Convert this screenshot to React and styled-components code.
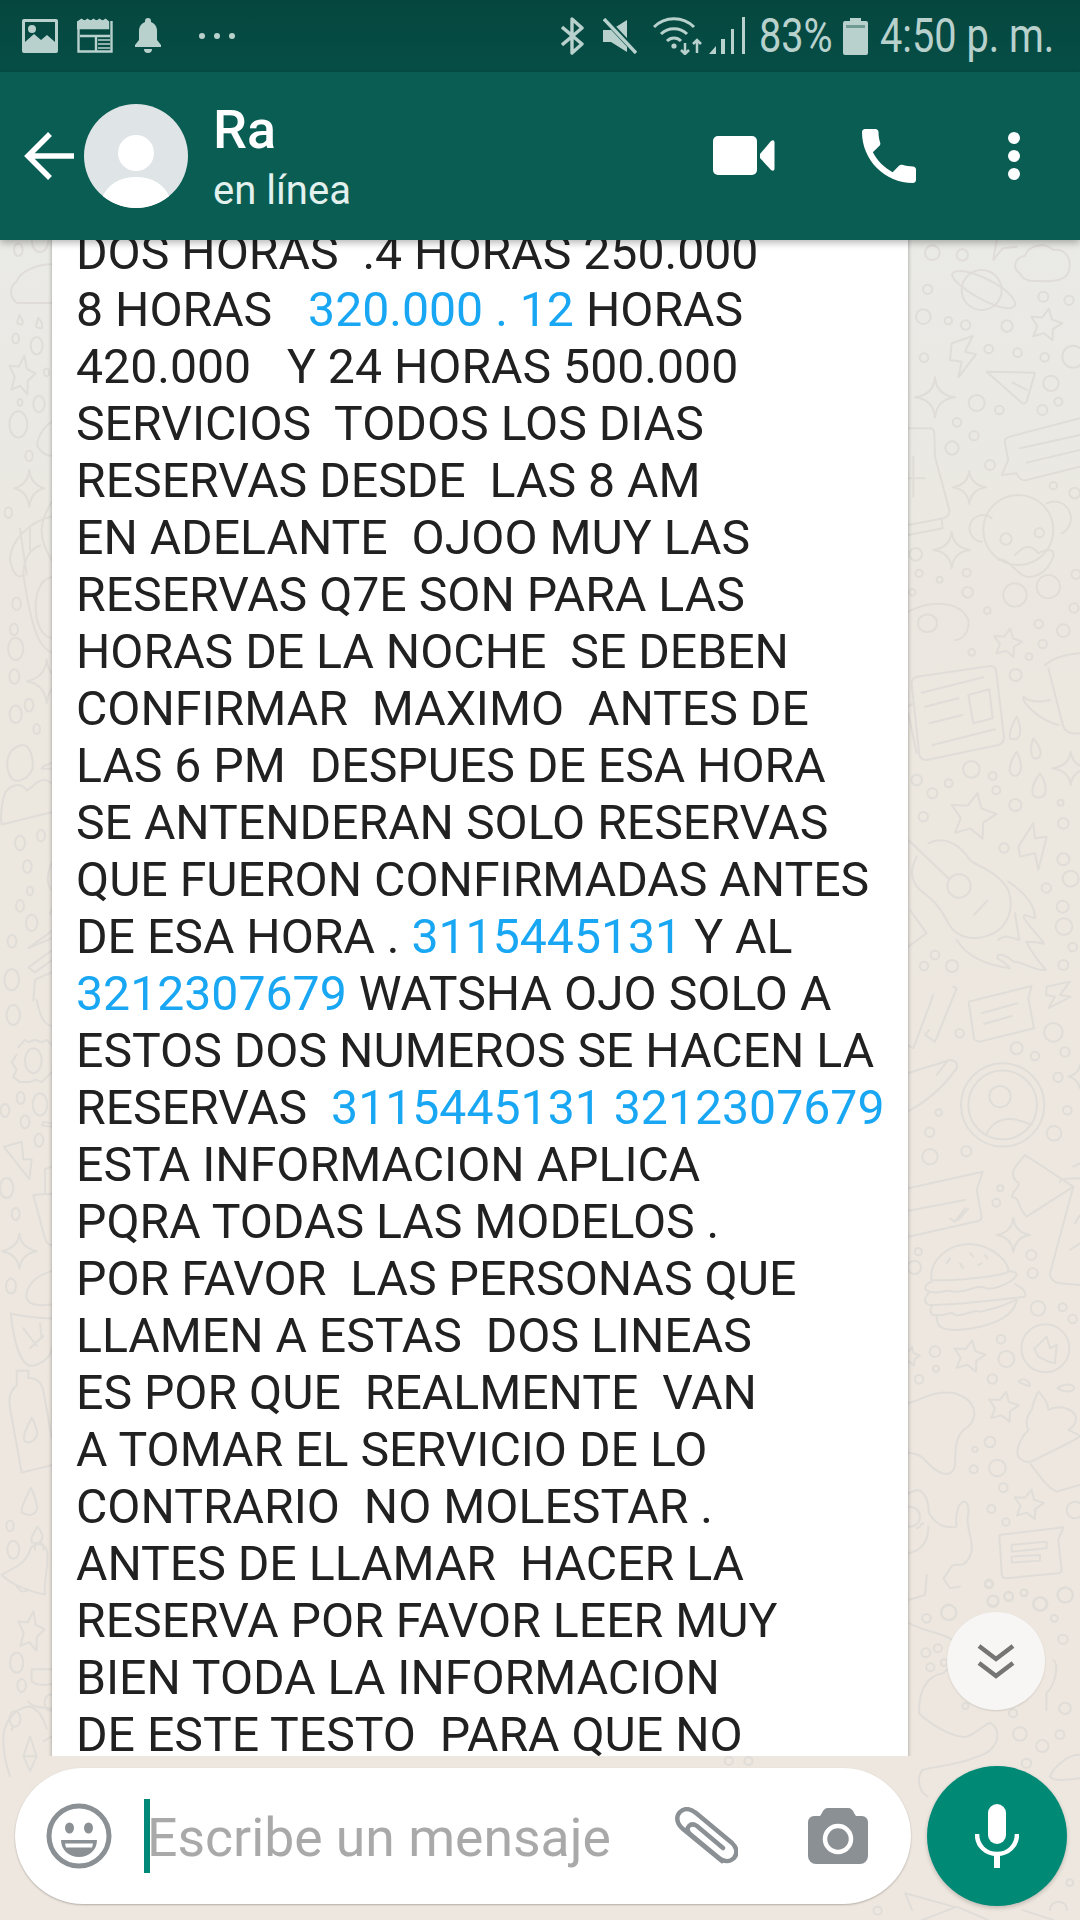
import { createGlobalStyle, styled } from "styled-components"

const GlobalStyle = createGlobalStyle`
  html, body {
    margin: 0;
    padding: 0;
    background: #eee7df;
  }
  * {
    box-sizing: border-box;
  }
`

const messageLines = [
  ["DOS HORAS  .4 HORAS 250.000"],
  ["8 HORAS   ", { link: "320.000 . 12" }, " HORAS"],
  ["420.000   Y 24 HORAS 500.000"],
  ["SERVICIOS  TODOS LOS DIAS"],
  ["RESERVAS DESDE  LAS 8 AM"],
  ["EN ADELANTE  OJOO MUY LAS"],
  ["RESERVAS Q7E SON PARA LAS"],
  ["HORAS DE LA NOCHE  SE DEBEN"],
  ["CONFIRMAR  MAXIMO  ANTES DE"],
  ["LAS 6 PM  DESPUES DE ESA HORA"],
  ["SE ANTENDERAN SOLO RESERVAS"],
  ["QUE FUERON CONFIRMADAS ANTES"],
  ["DE ESA HORA . ", { link: "3115445131" }, " Y AL"],
  [{ link: "3212307679" }, " WATSHA OJO SOLO A"],
  ["ESTOS DOS NUMEROS SE HACEN LA"],
  ["RESERVAS  ", { link: "3115445131" }, " ", { link: "3212307679" }],
  ["ESTA INFORMACION APLICA"],
  ["PQRA TODAS LAS MODELOS ."],
  ["POR FAVOR  LAS PERSONAS QUE"],
  ["LLAMEN A ESTAS  DOS LINEAS"],
  ["ES POR QUE  REALMENTE  VAN"],
  ["A TOMAR EL SERVICIO DE LO"],
  ["CONTRARIO  NO MOLESTAR ."],
  ["ANTES DE LLAMAR  HACER LA"],
  ["RESERVA POR FAVOR LEER MUY"],
  ["BIEN TODA LA INFORMACION"],
  ["DE ESTE TESTO  PARA QUE NO"],
]

const starPoints = (cx, cy, r) => {
  const pts = []
  for (let i = 0; i < 10; i++) {
    const rad = i % 2 ? r * 0.5 : r
    const a = -Math.PI / 2 + 0.2 + (i * Math.PI) / 5
    pts.push(`${cx + rad * Math.cos(a)},${cy + rad * Math.sin(a)}`)
  }
  return pts.join(" ")
}

const sparkle = (x, y, w, h) =>
  `M${x} ${y - h} Q${x + 4} ${y - 8} ${x + w} ${y} Q${x + 6} ${y + 6} ${x} ${y + h} Q${x - 6} ${y + 6} ${x - w} ${y} Q${x - 4} ${y - 8} ${x} ${y - h}Z`

// doodles, each group in its own crop coordinates
const doodleGroups = [
  {
    t: "translate(880 240) scale(.3333)",
    circles: [
      [157, 38, 22], [247, 45, 17], [143, 148, 14], [130, 230, 22], [205, 242, 11], [257, 255, 14], [381, 258, 17],
      [490, 170, 15], [567, 181, 14], [326, 327, 13], [413, 338, 13], [494, 352, 13], [580, 350, 33], [132, 353, 13],
      [290, 489, 24], [358, 510, 13], [513, 430, 23], [535, 485, 12], [487, 510, 15], [231, 547, 13], [282, 587, 14],
      [216, 624, 20], [330, 675, 15], [520, 737, 11], [584, 759, 16], [107, 943, 19], [117, 1000, 11], [179, 1019, 9],
      [260, 998, 12], [263, 1057, 16], [97, 1057, 10], [322, 1112, 10], [476, 1152, 13], [550, 1172, 19], [582, 1104, 14],
      [588, 1003, 14], [305, 150, 60],
      [415, 870, 105], [378, 897, 17], [478, 878, 14],
    ],
    stars: [[497, 255, 50]],
    paths: [
      "M420 100C395 85 405 50 435 48C445 15 495 5 520 30C550 25 575 50 568 85C565 115 540 122 500 124L450 122C435 120 425 110 420 100Z",
      "M225 95C255 85 330 115 375 150C410 180 415 200 390 205C350 205 280 170 240 135C215 115 210 100 225 95Z",
      "M215 310L278 288L255 335L288 343L235 412L245 365L210 360Z",
      "M320 395L465 398L440 485Q432 495 425 488Z M398 428L440 450",
      sparkle(165, 472, 60, 60), sparkle(268, 742, 50, 50), sparkle(215, 930, 55, 55),
      "M85 565L150 565Q162 565 163 580L165 650L208 810Q210 830 190 835L85 855M185 835L188 865L85 885",
      "M100 650V770M85 715H135",
      "M600 535L390 590Q372 595 375 610L385 660L365 705L410 700Q420 725 440 720L600 680",
      "M420 625L600 585M440 668L600 630",
      "M335 835A40 40 0 1 0 305 905M500 790A45 45 0 0 1 545 880",
      "M355 960C375 950 400 985 420 1000C450 1025 500 1005 520 950C525 925 500 925 475 940C450 905 425 925 405 945",
      "M405 1030A35 35 0 1 0 405 1100A35 35 0 1 0 405 1030M505 1005A35 35 0 1 0 505 1075A35 35 0 1 0 505 1005",
      "M85 1115C150 1080 240 1080 265 1140C270 1170 250 1200 225 1200M115 1150A28 22 0 1 0 170 1150A28 22 0 1 0 115 1150",
      "M350 0L340 60L368 25L410 20",
    ],
  },
  {
    t: "translate(900 640) scale(.3333)",
    circles: [
      [215, 37, 10], [387, 50, 10], [347, 105, 18], [428, 12, 13], [214, 388, 25], [50, 420, 16], [97, 460, 15],
      [146, 430, 12], [278, 408, 12], [289, 451, 12], [346, 495, 18], [70, 530, 14], [482, 488, 9], [490, 550, 16],
      [312, 624, 14], [490, 658, 18], [512, 716, 24], [439, 744, 14], [488, 800, 18], [492, 860, 25], [518, 921, 13],
      [105, 945, 13], [72, 978, 13], [156, 978, 18], [490, 975, 15], [179, 1180, 13], [460, 1177, 28], [350, 1225, 18],
      [405, 1248, 13], [495, 1236, 14], [474, 1312, 14], [116, 1418, 10], [502, 1411, 13], [89, 1477, 14], [462, 1480, 22],
      [177, 738, 35], [308, 1395, 125], [308, 1395, 103], [300, 1370, 32],
    ],
    stars: [[218, 530, 72], [322, 10, 45]],
    paths: [
      "M35 130Q35 115 50 110L270 78Q285 78 288 90L312 290Q312 310 295 315L80 360Q62 360 58 345Z",
      "M65 158L250 112M75 200L175 175M88 250L187 225M98 315L285 268",
      "M205 165L268 148L278 235L220 250Z",
      "M40 190L22 200M50 340L25 220",
      "M330 295C325 270 350 230 350 230C365 260 365 295 345 298C337 298 332 298 330 295Z",
      "M395 345C390 320 400 295 400 295C420 320 432 345 412 355C403 358 397 352 395 345Z",
      "M330 395C325 370 350 335 350 335C365 360 370 400 348 408C338 408 332 402 330 395Z",
      "M398 460C392 435 420 400 420 400C440 430 445 465 422 472C410 474 400 470 398 460Z",
      sparkle(512, 385, 55, 50),
      "M435 75Q470 45 540 40M445 85L490 260Q500 285 540 280M370 170C395 190 430 185 450 180M370 170C365 190 420 240 475 255",
      "M355 620L400 550L405 595L440 590L415 690L405 640L360 650Z",
      "M25 600L145 715M50 650C30 690 30 720 60 750C100 780 120 800 145 850C175 905 240 900 280 880C320 860 345 810 325 750C290 690 230 680 210 660C170 600 120 590 85 610",
      "M222 825L262 782",
      "M325 725C370 755 405 790 405 835C380 830 370 815 372 835C395 870 425 895 432 912C410 905 395 905 378 905C400 945 420 970 438 990C400 995 360 960 340 965C320 945 290 935 292 955C310 965 325 975 330 985C260 975 200 950 170 900",
      "M345 820L358 900C335 895 315 880 295 900",
      "M30 810L80 880L25 920",
      "M100 1065L40 1225L22 1215M170 1045L105 1205L75 1185L88 1170M160 1040L170 1045",
      "M206 1085L395 1038L385 1075L402 1165L240 1205Q225 1205 222 1195Z M245 1120L352 1090M252 1152L335 1128",
      "M440 1040L510 1025L480 1065L512 1070L445 1105L465 1070L438 1065Z",
      "M22 1300L150 1260Q175 1260 170 1285C130 1340 80 1385 22 1415M110 1305L145 1260",
      "M260 1480Q300 1410 395 1455",
      sparkle(540, 1310, 35, 35),
    ],
  },
  {
    t: "translate(900 1140) scale(.3333)",
    circles: [
      [90, 50, 23], [199, 34, 15], [301, 145, 9], [289, 188, 12], [55, 335, 11], [43, 382, 20], [394, 345, 15],
      [398, 400, 15], [414, 505, 22], [488, 502, 12], [518, 537, 13], [105, 635, 16], [108, 686, 9], [303, 598, 13],
      [319, 657, 24], [277, 717, 14], [57, 718, 13], [270, 906, 16], [225, 928, 8], [221, 988, 12], [292, 984, 25],
      [310, 1043, 13], [274, 1107, 12], [318, 1146, 11], [525, 1110, 25], [267, 1332, 13], [279, 1384, 17], [326, 1371, 13],
      [372, 1359, 10], [419, 1392, 20], [495, 1365, 23], [146, 1417, 23], [436, 625, 72], [30, 1130, 30],
    ],
    stars: [[207, 650, 50], [309, 802, 48], [385, 1095, 47], [30, 650, 30]],
    paths: [
      "M25 145L248 95L230 150L245 230Q245 240 235 243L25 290",
      "M25 212L195 180M150 235L165 245L195 205M175 240L205 205",
      sparkle(340, 285, 50, 52),
      "M375 45C345 80 325 100 350 125C370 130 340 150 335 170C365 175 345 195 380 230L520 140L375 45",
      "M520 80Q540 70 540 70M480 125Q480 115 540 115M520 140L450 400Q450 425 480 430L540 435M525 250L540 225M510 330L540 310",
      "M95 420C85 360 150 310 210 312C280 315 330 370 325 395C300 410 150 425 95 420Z",
      "M140 370L150 355M180 370L190 385M210 340L220 350M235 375L245 370M255 345L262 355",
      "M95 425C70 435 70 450 90 455C130 465 130 445 160 455C210 460 220 430 260 445C290 450 350 420 350 402C345 395 330 392 325 395",
      "M90 455C70 475 70 490 90 495C170 495 290 480 375 470C380 450 360 440 345 432",
      "M95 500C85 520 100 530 110 525C140 530 150 510 165 525C200 530 220 505 240 515C270 510 320 495 345 480",
      "M110 530C110 565 130 570 170 570C250 565 340 540 350 480",
      "M405 625L440 590L450 625L470 615L465 670L445 665L415 650L402 625Z",
      "M25 790C70 775 110 750 165 760C230 780 235 830 205 860C165 880 165 930 165 980C150 1020 110 1000 75 960C60 940 30 940 25 938",
      "M355 725C375 705 395 735 388 738C370 735 355 725 355 725ZM472 745C490 730 525 730 523 745C515 760 490 755 472 745Z",
      "M395 810C400 790 410 760 417 755C430 770 445 790 445 810C480 790 520 810 528 830C530 850 520 860 505 870C525 880 540 885 540 890",
      "M395 810C380 830 375 845 385 870C365 890 345 925 355 950C375 975 395 965 405 960C440 940 510 910 540 890",
      "M390 970C420 1010 445 1045 470 1055L540 1035",
      "M25 1060L50 1050C70 1050 80 1075 85 1095C80 1130 120 1170 170 1160C160 1080 210 1060 205 1120C195 1165 220 1190 215 1235C205 1265 190 1275 180 1275C145 1270 155 1290 130 1315L150 1345L180 1340M80 1305L75 1365L25 1380M25 1240C70 1230 85 1200 85 1160",
      "M60 1160L50 1165M70 1150L62 1155",
      "M298 1185L490 1162L475 1200L485 1290Q485 1298 475 1300L318 1315Q305 1315 305 1300Z M335 1215L440 1205L440 1225L335 1235Z M335 1250L420 1245L420 1262L335 1268Z",
    ],
  },
  {
    t: "translate(0 240) scale(.3333 .485)",
    circles: [
      [55, 20, 13], [120, 0, 25], [47, 203, 10], [110, 218, 18], [140, 273, 8], [60, 335, 7], [117, 338, 17],
      [55, 380, 27], [87, 445, 11], [25, 562, 11], [50, 750, 13], [42, 803, 12], [47, 843, 23], [43, 900, 15],
      [47, 978, 18], [87, 959, 13], [110, 1008, 10], [60, 1243, 15], [123, 1228, 12], [82, 1292, 13], [90, 1342, 9],
      [60, 1373, 12], [95, 1408, 17], [36, 1446, 13], [35, 1525, 22],
    ],
    stars: [[65, 280, 42]],
    paths: [
      "M155 50C110 50 60 65 50 85C30 95 25 115 50 130L155 130",
      "M58 155C52 170 45 172 65 175C72 170 68 165 58 155ZM115 160C105 180 105 182 125 182C130 172 125 170 115 160Z",
      "M155 375C130 385 110 410 112 425C125 440 140 445 155 445",
      sparkle(88, 512, 45, 38),
      "M155 540C120 580 110 610 155 660M155 570C90 580 30 620 30 660C40 690 55 700 70 690C70 650 100 635 120 630M60 595L80 690M90 590L90 640",
      "M70 690C90 780 110 840 155 850M155 695C115 700 100 740 110 780C120 810 140 820 155 820",
      sparkle(140, 910, 60, 45),
      "M50 1045C85 1030 100 1060 98 1090C90 1105 70 1115 50 1115C20 1115 5 1060 50 1045Z",
      "M155 1078L130 1085L125 1090L155 1090",
      "M155 1120C120 1100 100 1130 80 1135C60 1115 30 1125 15 1140C5 1160 0 1190 5 1205L155 1180",
      "M155 1285C140 1310 140 1330 155 1340M155 1380L150 1390",
      "M155 1425L85 1460L155 1440M155 1465L85 1500L105 1510L155 1485",
      "M155 1510L105 1525L100 1568",
    ],
  },
  {
    t: "translate(0 1000) scale(.3333 .4975)",
    circles: [
      [40, 30, 20], [100, 122, 25], [15, 222, 13], [62, 197, 12], [120, 210, 22], [75, 245, 13], [117, 282, 13],
      [20, 378, 20], [47, 430, 12], [33, 575, 15], [30, 1057, 11], [40, 1105, 18], [50, 1332, 20], [65, 1378, 13],
      [45, 1445, 16], [150, 1412, 16],
    ],
    stars: [[92, 1270, 42]],
    paths: [
      "M110 0C120 30 130 50 155 52",
      "M55 95L75 80L85 85L105 80L125 85L140 80L155 90M50 110L35 125L50 140L40 155L60 165L90 165L105 160L125 165L155 145",
      "M155 248L130 245L125 252L155 255",
      "M12 295L65 285L70 320L95 320L88 360Z",
      "M155 335L135 340V390L100 392L135 480Q145 495 155 492M135 390H155",
      sparkle(58, 505, 52, 35),
      "M155 545C100 555 75 580 80 600C90 615 120 615 155 612",
      "M32 630C60 635 120 640 155 640M32 630C40 680 60 740 100 735C130 730 155 715 155 700M70 660L110 695M90 700L130 675M120 650L125 680",
      "M50 775L50 745L85 745L85 760C110 760 125 770 130 785L155 880M50 775C30 785 25 800 30 820L65 950L155 935",
      "M95 840C80 860 70 870 72 885C85 895 110 885 112 870C108 855 100 845 95 840Z",
      "M92 980C80 1000 60 1020 65 1030C85 1040 110 1035 112 1020C108 1005 100 990 92 980Z",
      "M112 1058C100 1075 90 1080 95 1090C110 1095 130 1090 127 1075C123 1068 118 1062 112 1058Z",
      "M5 1155C50 1140 80 1130 90 1105C100 1090 130 1090 140 1105C150 1135 130 1160 135 1195C100 1190 40 1180 5 1155Z",
      "M50 1178C60 1190 75 1192 85 1185M105 1105A14 10 0 1 1 130 1105",
      "M155 1345H95V1370C110 1378 130 1378 155 1375",
      "M155 1425C130 1420 100 1425 85 1410M10 1480C15 1440 60 1420 90 1420C110 1425 130 1440 140 1465",
      "M10 1480C10 1520 20 1540 30 1560M155 1480L130 1490M40 1460L35 1468M90 1480L70 1520L90 1550L110 1520Z M70 1520H110",
    ],
  },
  {
    t: "translate(540 1580) scale(.3445 .3333)",
    circles: [
      [1187, 98, 22], [1122, 115, 13], [1120, 218, 13], [1155, 205, 12], [1133, 262, 12], [1173, 248, 10], [1303, 12, 10],
      [1315, 62, 15], [1360, 48, 13], [1405, 38, 10], [1453, 72, 20], [1525, 45, 22], [1493, 115, 10], [1518, 178, 14],
      [1235, 378, 9], [1373, 400, 12], [1524, 385, 17], [1393, 462, 20], [1458, 498, 18], [1509, 464, 13], [1412, 550, 14],
      [1538, 908, 10], [980, 992, 12], [605, 543, 12], [548, 543, 12],
    ],
    stars: [],
    paths: [
      "M1072 130C1130 160 1180 160 1210 190C1220 215 1195 260 1170 280C1110 290 1100 350 1100 400C1140 440 1200 470 1225 470C1250 480 1300 420 1310 430C1340 450 1335 510 1270 530C1200 560 1130 560 1110 570C1095 590 1095 630 1125 650",
      "M1490 240C1505 250 1500 310 1470 340L1470 390",
      "M1480 590C1490 560 1540 520 1565 525M1480 590C1490 605 1530 600 1568 595",
      "M1080 990L1060 940L1200 980M1110 1020L1210 980L1300 1020",
      "M1400 990L1490 1020M1480 990A25 25 0 1 1 1530 990",
    ],
  },
]

function Wallpaper() {
  return (
    <WallpaperSvg viewBox="0 240 1080 1680" fill="none" stroke="#e0ddd8" strokeWidth="2" strokeLinejoin="round" strokeLinecap="round">
      {doodleGroups.map((g, i) => (
        <g key={i} transform={g.t}>
          {g.circles.map(([cx, cy, r], j) => (
            <circle key={j} cx={cx} cy={cy} r={r} />
          ))}
          {g.stars.map(([cx, cy, r], j) => (
            <polygon key={j} points={starPoints(cx, cy, r)} />
          ))}
          {g.paths.map((d, j) => (
            <path key={j} d={d} />
          ))}
        </g>
      ))}
    </WallpaperSvg>
  )
}

function App() {
  return (
    <>
      <GlobalStyle />
      <Page>
        <StatusBar>
          <StatusLeft>
            <svg width="38" height="36" viewBox="0 0 38 36">
              <path fill="#b9d1cd" fillRule="evenodd" d="M3 1h32a2 2 0 0 1 2 2v30a2 2 0 0 1-2 2H3a2 2 0 0 1-2-2V3a2 2 0 0 1 2-2zm1 3v20l9-8 7 6 6-5 8 7V4zM11 7a4 4 0 1 1 0 8 4 4 0 0 1 0-8z" />
            </svg>
            <svg width="36" height="36" viewBox="0 0 36 36" fill="none" stroke="#b9d1cd">
              <path strokeWidth="2.4" d="M1.5 3v30.5h33V3" />
              <path strokeWidth="2.4" d="M1.5 4l3-2 3 2 3-2 3 2 3-2 3 2 3-2 3 2 3-2 2.5 2v6h-33z" fill="#b9d1cd" />
              <path strokeWidth="2.4" d="M3 18h30M19 18v15" />
              <path strokeWidth="1.6" d="M21 22h12M21 26h12M21 30h12" />
            </svg>
            <BellIcon width="28" height="36" viewBox="0 0 28 36" fill="#b9d1cd">
              <path d="M14 0a3 3 0 0 1 3 3v1c4 1.500 6 5 6 9v9l4 5v2H1v-2l4-5v-9c0-4 2-7.500 6-9V3a3 3 0 0 1 3-3z" />
              <path d="M10 31h8a4 4 0 0 1-8 0z" />
            </BellIcon>
            <StatusDots>
              <i />
              <i />
              <i />
            </StatusDots>
          </StatusLeft>
          <StatusRight>
            <svg width="24" height="38" viewBox="0 0 24 38" fill="none" stroke="#b9d1cd" strokeWidth="3.400">
              <path d="M1 10l20 17-10 9V2l10 9L1 28" strokeLinejoin="round" />
            </svg>
            <MuteIcon width="34" height="36" viewBox="0 0 34 36">
              <path fill="#b9d1cd" d="M0 12h8L24 2v32L8 24H0z" />
              <path stroke="#064d45" strokeWidth="6" d="M0 -1L34 35" />
              <path stroke="#b9d1cd" strokeWidth="3.400" d="M1 1L33 35" />
            </MuteIcon>
            <WifiIcon width="50" height="38" viewBox="0 0 50 38" fill="none" stroke="#b9d1cd" strokeWidth="3">
              <path d="M1 10C12 -1 30 -1 41 10M8 17c7-7 19-7 26 0M14 24c4-4 10-4 14 0" />
              <circle cx="21" cy="29" r="2.600" fill="#b9d1cd" stroke="none" />
              <path strokeWidth="2.500" d="M32 26v11M28 33l4 4 4-4M44 36V23M40 27l4-4 4 4" />
            </WifiIcon>
            <SignalIcon width="36" height="38" viewBox="0 0 36 38" fill="#b9d1cd">
              <path d="M0 37l7-8v8zM12 22h4v15h-4zM22 12h3v25h-3zM33 0h3v37h-3z" />
            </SignalIcon>
            <StatusText $width={71} $ml={14}>
              <span>83%</span>
            </StatusText>
            <BatteryIcon width="25" height="38" viewBox="0 0 25 38">
              <path fill="#b9d1cd" d="M7 1h11v3h5a2 2 0 0 1 2 2v30a2 2 0 0 1-2 2H2a2 2 0 0 1-2-2V6a2 2 0 0 1 2-2h5z" />
              <path fill="#6f9b94" d="M3 8h19v3H3z" />
            </BatteryIcon>
            <StatusText $width={174} $ml={12}>
              <span>4:50 p. m.</span>
            </StatusText>
          </StatusRight>
        </StatusBar>

        <Header>
          <BackIcon width="50" height="50" viewBox="0 0 50 50" fill="none" stroke="#fff" strokeWidth="5.500">
            <path d="M50 25H4M26 3L4 25l22 22" />
          </BackIcon>
          <Avatar>
            <svg width="104" height="104" viewBox="0 0 104 104">
              <circle cx="52" cy="49" r="18" fill="#fff" />
              <path fill="#fff" d="M18 94c6-14 18-21 34-21s28 7 34 21a52 52 0 0 1-68 0z" />
            </svg>
          </Avatar>
          <Contact>
            <ContactName>Ra</ContactName>
            <ContactState>en línea</ContactState>
          </Contact>
          <Actions>
            <svg width="62" height="40" viewBox="0 0 62 40" fill="#fff">
              <rect x="0" y="0" width="44" height="39" rx="5" />
              <path d="M47 18L58 5q3-2 3.500 1v27q-.500 3-3.500 1L47 22z" />
            </svg>
            <PhoneIcon width="72" height="72" viewBox="0 0 24 24" fill="#fff">
              <path d="M6.620 10.790c1.440 2.830 3.760 5.140 6.590 6.590l2.200-2.200c.270-.270.670-.360 1.020-.240 1.120.370 2.330.570 3.570.570.550 0 1 .450 1 1V20c0 .550-.450 1-1 1-9.390 0-17-7.610-17-17 0-.550.450-1 1-1h3.500c.550 0 1 .450 1 1 0 1.250.200 2.450.570 3.570.110.350.030.740-.250 1.020l-2.200 2.200z" />
            </PhoneIcon>
            <MoreDots>
              <i />
              <i />
              <i />
            </MoreDots>
          </Actions>
        </Header>

        <Main>
          <Wallpaper />
          <ChatViewport>
            <Bubble>
              <MessageText>
                {messageLines.map((parts, i) => (
                  <Line key={i}>
                    {parts.map((part, j) =>
                      typeof part === "string" ? part : <Link key={j}>{part.link}</Link>
                    )}
                  </Line>
                ))}
              </MessageText>
            </Bubble>
            <ScrollDown>
              <svg width="40" height="36" viewBox="0 0 40 36" fill="none" stroke="#757575" strokeWidth="4.500">
                <path d="M3 3l17 13L37 3M3 20l17 13 17-13" />
              </svg>
            </ScrollDown>
          </ChatViewport>
          <Composer>
            <InputPill>
              <svg width="66" height="66" viewBox="0 0 66 66">
                <circle cx="33" cy="33" r="30" fill="none" stroke="#8b9095" strokeWidth="5" />
                <ellipse cx="23.500" cy="25" rx="4.500" ry="5.500" fill="#8b9095" />
                <ellipse cx="42.500" cy="25" rx="4.500" ry="5.500" fill="#8b9095" />
                <path fill="#8b9095" d="M15 37h36c0 10-8 17-18 17s-18-7-18-17z" />
                <path fill="#fff" d="M19 40.500h28l-1 4H20z" />
              </svg>
              <Caret />
              <Placeholder>Escribe un mensaje</Placeholder>
              <svg width="64" height="58" viewBox="0 0 64 58" fill="none" stroke="#8b9095" strokeWidth="4.500">
                <path d="M48 54L9 22C2 16 2 9 6 5c4-4 10-4 16 1l36 30c5 5 6 10 2 15-4 4-10 4-15 0L16 27c-3-3-3-6-1-8s5-2 8 0l26 22" strokeLinecap="round" />
              </svg>
              <CameraIcon width="60" height="56" viewBox="0 0 60 56">
                <path fill="#8b9095" d="M20 0h20c3 0 5 2 6 5l2 3h6a6 6 0 0 1 6 6v34a8 8 0 0 1-8 8H8a8 8 0 0 1-8-8V14a6 6 0 0 1 6-6h6l2-3c1-3 3-5 6-5z" />
                <circle cx="30" cy="31" r="13" fill="none" stroke="#fff" strokeWidth="4.500" />
              </CameraIcon>
            </InputPill>
            <MicButton>
              <svg width="44" height="64" viewBox="0 0 44 64">
                <rect x="13" y="0" width="18" height="40" rx="9" fill="#fff" />
                <path d="M2 30c0 12 9 20 20 20s20-8 20-20" fill="none" stroke="#fff" strokeWidth="4.500" />
                <rect x="19" y="48" width="6" height="16" fill="#fff" />
              </svg>
            </MicButton>
          </Composer>
        </Main>
      </Page>
    </>
  )
}

export default App

const Page = styled.div`
  display: flex;
  flex-direction: column;
  width: 1080px;
  height: 1920px;
  overflow: hidden;
  font-family: Roboto, "Liberation Sans", sans-serif;
`

const StatusBar = styled.div`
  display: flex;
  align-items: center;
  justify-content: space-between;
  flex: none;
  height: 72px;
  padding: 0 26px 0 21px;
  background: linear-gradient(#05473f, #064e46);
`

const StatusLeft = styled.div`
  display: flex;
  align-items: center;
  gap: 18px;
`

const BellIcon = styled.svg`
  margin-left: 3px;
`

const StatusRight = styled.div`
  display: flex;
  align-items: center;
`

const StatusDots = styled.div`
  display: flex;
  gap: 9px;
  margin-left: 19px;

  i {
    width: 6px;
    height: 6px;
    border-radius: 50%;
    background: #b9d1cd;
  }
`

const MuteIcon = styled.svg`
  margin-left: 18px;
`

const WifiIcon = styled.svg`
  margin-left: 16px;
`

const SignalIcon = styled.svg`
  margin-left: 6px;
`

const BatteryIcon = styled.svg`
  margin-left: 13px;
`

const StatusText = styled.div`
  width: ${props => props.$width}px;
  margin-left: ${props => props.$ml}px;
  color: #b9d1cd;
  font-size: 48px;
  line-height: 54px;
  white-space: nowrap;

  span {
    display: inline-block;
    transform: scaleX(0.827);
    transform-origin: left center;
  }
`

const Header = styled.div`
  position: relative;
  z-index: 2;
  display: flex;
  align-items: center;
  flex: none;
  height: 168px;
  padding: 0 60px 0 24px;
  background: #095d53;
  box-shadow: 0 3px 7px rgba(0, 0, 0, 0.28);
`

const BackIcon = styled.svg`
  flex: none;
`

const Avatar = styled.div`
  flex: none;
  width: 104px;
  height: 104px;
  margin-left: 10px;
  border-radius: 50%;
  overflow: hidden;
  background: #dfe5e7;
`

const Contact = styled.div`
  display: flex;
  flex-direction: column;
  margin-left: 25px;
`

const ContactName = styled.div`
  color: #fff;
  font-size: 54px;
  font-weight: 500;
  line-height: 58px;
`

const ContactState = styled.div`
  margin-top: 11px;
  color: #e3f1ee;
  font-size: 40px;
  line-height: 42px;
`

const Actions = styled.div`
  display: flex;
  align-items: center;
  margin-left: auto;
`

const PhoneIcon = styled.svg`
  margin-left: 78px;
`

const MoreDots = styled.div`
  display: flex;
  flex-direction: column;
  gap: 6px;
  margin-left: 83px;

  i {
    width: 12px;
    height: 12px;
    border-radius: 50%;
    background: #fff;
  }
`

const Main = styled.div`
  position: relative;
  display: flex;
  flex-direction: column;
  flex: 1;
  min-height: 0;
  background: linear-gradient(#eaeae6 0, #ece7df 28%, #eee7df 100%);
`

const WallpaperSvg = styled.svg`
  position: absolute;
  inset: 0;
  width: 1080px;
  height: 1680px;

  * {
    vector-effect: non-scaling-stroke;
  }
`

const ChatViewport = styled.div`
  position: relative;
  flex: 1;
  min-height: 0;
  padding-left: 52px;
  overflow: hidden;
`

const Bubble = styled.div`
  width: 856px;
  margin-top: -60px;
  padding: 44px 0 60px 24px;
  background: #fff;
  box-shadow: 0 0 4px rgba(0, 0, 0, 0.35);
`

const MessageText = styled.div`
  color: #212121;
  font-size: 49px;
  line-height: 57px;
  white-space: pre;
  transform: scaleX(0.983);
  transform-origin: left top;
`

const Line = styled.div``

const Link = styled.span`
  color: #19a7f4;
`

const ScrollDown = styled.div`
  position: absolute;
  left: 947px;
  top: 1372px;
  display: flex;
  align-items: center;
  justify-content: center;
  width: 98px;
  height: 98px;
  border-radius: 50%;
  background: #f7f6f4;
  box-shadow: 0 1px 2px rgba(0, 0, 0, 0.12);
`

const Composer = styled.div`
  position: relative;
  display: flex;
  align-items: flex-start;
  flex: none;
  gap: 16px;
  height: 164px;
  padding: 12px 13px 0 15px;
`

const InputPill = styled.div`
  display: flex;
  align-items: center;
  flex: 1;
  height: 136px;
  padding: 0 43px 0 31px;
  border-radius: 68px;
  background: #fff;
  box-shadow: 0 1px 2px rgba(0, 0, 0, 0.25);
`

const Caret = styled.div`
  flex: none;
  width: 6px;
  height: 74px;
  margin-left: 32px;
  background: #00897b;
`

const Placeholder = styled.div`
  flex: 1;
  margin-left: -3px;
  padding-top: 2px;
  color: #a9a9a9;
  font-size: 53.5px;
  white-space: nowrap;
`

const CameraIcon = styled.svg`
  margin-left: 70px;
`

const MicButton = styled.div`
  display: flex;
  align-items: center;
  justify-content: center;
  flex: none;
  width: 140px;
  height: 140px;
  margin-top: -2px;
  border-radius: 50%;
  background: #008a76;
  box-shadow: 0 2px 4px rgba(0, 0, 0, 0.2);
`
